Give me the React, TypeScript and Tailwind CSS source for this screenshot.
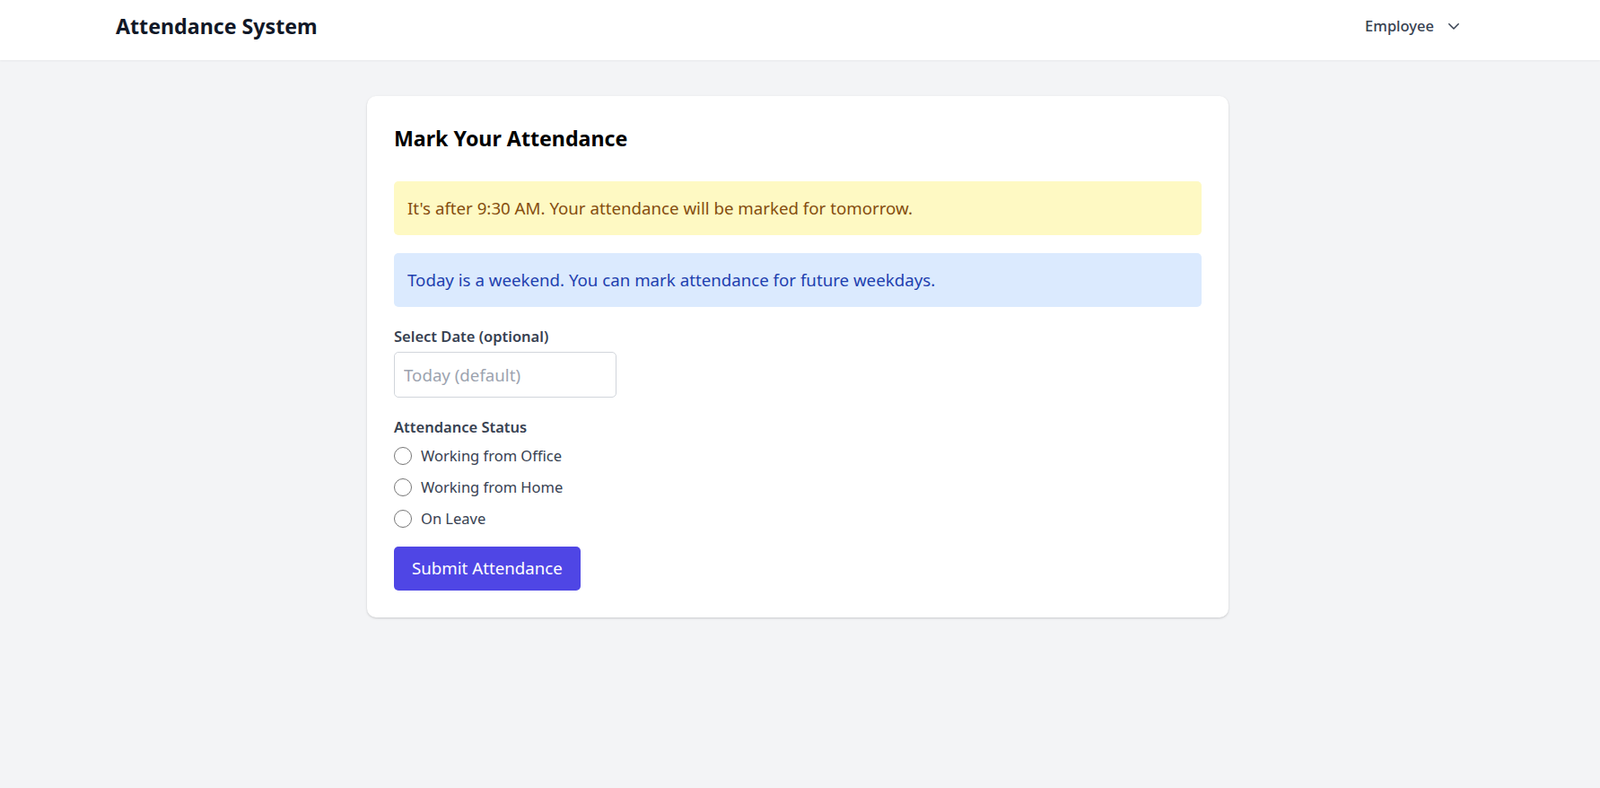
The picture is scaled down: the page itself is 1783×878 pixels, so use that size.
import React from "react";

const font = { fontFamily: '"Noto Sans", "Open Sans", sans-serif' };

function Radio({ label }: { label: string }) {
  return (
    <label className="flex items-center h-[30px] cursor-pointer">
      <span className="w-[20px] h-[20px] rounded-full border-[1.5px] border-[#767676] bg-white shrink-0" />
      <span className="ml-[10px] text-[16.5px] text-[#374151]">{label}</span>
    </label>
  );
}

export default function App() {
  return (
    <div className="min-h-screen bg-[#f3f4f6]" style={font}>
      <header className="bg-white h-[67px] shadow-[0_1px_2px_rgba(0,0,0,0.05)]">
        <div className="pr-[5px]">
          <div className="max-w-[1600px] mx-auto px-[40px] h-[58px] flex items-center justify-between">
            <h1 className="text-[23.2px] font-bold text-[#111827] leading-[35px]">Attendance System</h1>
            <button className="flex items-center gap-[16px] pr-[23px] text-[16.5px] font-medium text-[#374151]">
              <span>Employee</span>
              <svg width="12" height="7" viewBox="0 0 12 7" fill="none" stroke="#374151" strokeWidth="1.5" strokeLinecap="round" strokeLinejoin="round">
                <path d="M0.8 0.8 L6 6 L11.2 0.8" />
              </svg>
            </button>
          </div>
        </div>
      </header>
      <main className="pt-[40px] pr-[5px]">
        <div className="max-w-[960px] mx-auto bg-white rounded-[10px] shadow-[0_1px_3px_rgba(0,0,0,0.12),0_1px_2px_rgba(0,0,0,0.06)] p-[30px]">
          <h2 className="text-[23.2px] font-bold text-black leading-[35px] mb-[30px]">Mark Your Attendance</h2>
          <div className="bg-[#fef9c3] text-[#854d0e] rounded-[5px] p-[15px] text-[18.7px] leading-[30px] mb-[20px]">
            It's after 9:30 AM. Your attendance will be marked for tomorrow.
          </div>
          <div className="bg-[#dbeafe] text-[#1e40af] rounded-[5px] p-[15px] text-[18.7px] leading-[30px] mb-[20px]">
            Today is a weekend. You can mark attendance for future weekdays.
          </div>
          <div className="mb-[20px]">
            <label className="block text-[16.5px] leading-[25px] font-semibold text-[#374151] mb-[5px]">Select Date (optional)</label>
            <input
              type="text"
              placeholder="Today (default)"
              className="w-[248px] h-[51px] border border-[#d1d5db] rounded-[5px] px-[10px] text-[18.7px] text-[#111827] placeholder:text-[#9ca3af] outline-none"
            />
          </div>
          <div>
            <div className="text-[16.5px] leading-[25px] font-semibold text-[#374151] mb-[5px]">Attendance Status</div>
            <div className="flex flex-col gap-[5px]">
              <Radio label="Working from Office" />
              <Radio label="Working from Home" />
              <Radio label="On Leave" />
            </div>
          </div>
          <button className="mt-[16px] h-[49px] px-[20px] bg-[#4f46e5] text-white text-[18.7px] rounded-[5px]">
            Submit Attendance
          </button>
        </div>
      </main>
    </div>
  );
}
